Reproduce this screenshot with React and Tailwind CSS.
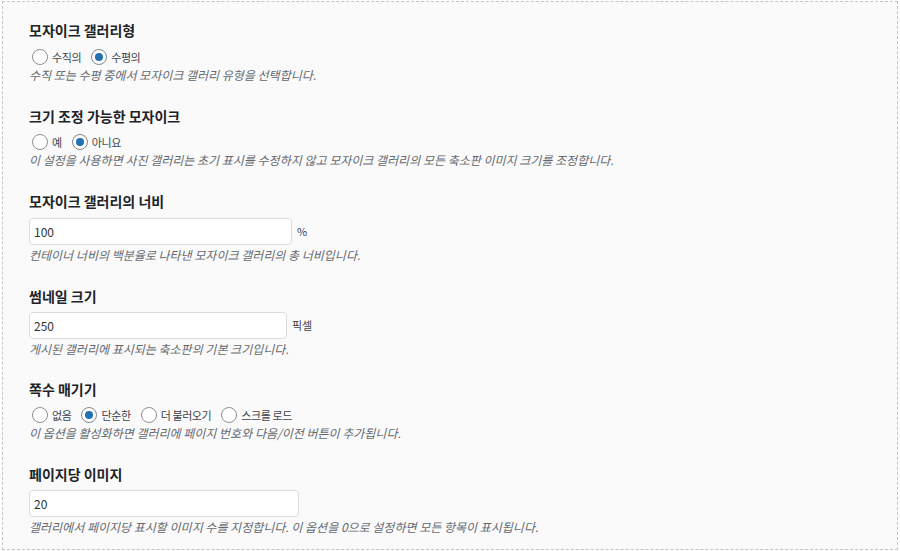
import React, { useState } from 'react';

const font = { fontFamily: '"Noto Sans CJK KR", "Noto Sans", sans-serif' };

function Radio({ label, checked, onChange }) {
  return (
    <label className="flex items-center gap-[4px] mr-[10px] cursor-pointer">
      <span
        onClick={onChange}
        className={`w-[16px] h-[16px] rounded-full border bg-white flex items-center justify-center ${
          checked ? 'border-[#7e8993]' : 'border-[#8c8f94]'
        }`}
      >
        {checked && <span className="w-[8px] h-[8px] rounded-full bg-[#2271b1]" />}
      </span>
      <span className="text-[11px] tracking-[-0.4px] text-[#3c434a] leading-[20px]">{label}</span>
    </label>
  );
}

function RadioSection({ title, options, initial, desc, gap }) {
  const [value, setValue] = useState(initial);
  return (
    <div className="ml-[26px]">
      <h3 className="text-[14px] font-semibold text-[#1d2327] leading-[20px] h-[20px]">{title}</h3>
      <div className={`flex items-center h-[20px] pl-[3px] ${gap}`}>
        {options.map((o, i) => (
          <Radio key={o} label={o} checked={value === i} onChange={() => setValue(i)} />
        ))}
      </div>
      <p className="text-[12px] italic text-[#646970] leading-[16px] h-[16px]">{desc}</p>
    </div>
  );
}

function InputSection({ title, value, unit, width, desc, gap }) {
  const [val, setVal] = useState(value);
  return (
    <div className="ml-[26px]">
      <h3 className="text-[14px] font-semibold text-[#1d2327] leading-[20px] h-[20px]">{title}</h3>
      <div className={`flex items-center gap-[5px] ${gap}`}>
        <input
          value={val}
          onChange={(e) => setVal(e.target.value)}
          className={`${width} h-[27px] bg-white border border-[#dcdcde] rounded-[4px] px-[4px] text-[12px] text-[#2c3338] outline-none`}
          style={font}
        />
        {unit && <span className="text-[11px] text-[#3c434a]">{unit}</span>}
      </div>
      <p className="text-[12px] italic text-[#646970] leading-[16px] h-[16px] mt-[2px]">{desc}</p>
    </div>
  );
}

export default function App() {
  return (
    <div className="w-[900px] h-[551px] bg-white p-[1px] pl-[2px]" style={font}>
      <div className="w-[896px] h-[549px] border border-dashed border-[#c3c4c7] bg-[#fafafa] pt-[18px]">
        <RadioSection
          gap="mt-[7px]"
          title="모자이크 갤러리형"
          options={['수직의', '수평의']}
          initial={1}
          desc="수직 또는 수평 중에서 모자이크 갤러리 유형을 선택합니다."
        />
        <div className="h-[23px]" />
        <RadioSection
          gap="mt-[6px]"
          title="크기 조정 가능한 모자이크"
          options={['예', '아니요']}
          initial={1}
          desc="이 설정을 사용하면 사진 갤러리는 초기 표시를 수정하지 않고 모자이크 갤러리의 모든 축소판 이미지 크기를 조정합니다."
        />
        <div className="h-[23px]" />
        <InputSection
          gap="mt-[7px]"
          title="모자이크 갤러리의 너비"
          value="100"
          unit="%"
          width="w-[263px]"
          desc="컨테이너 너비의 백분율로 나타낸 모자이크 갤러리의 총 너비입니다."
        />
        <div className="h-[23px]" />
        <InputSection
          gap="mt-[6px]"
          title="썸네일 크기"
          value="250"
          unit="픽셀"
          width="w-[258px]"
          desc="게시된 갤러리에 표시되는 축소판의 기본 크기입니다."
        />
        <div className="h-[22px]" />
        <RadioSection
          gap="mt-[6px]"
          title="쪽수 매기기"
          options={['없음', '단순한', '더 불러오기', '스크롤 로드']}
          initial={1}
          desc="이 옵션을 활성화하면 갤러리에 페이지 번호와 다음/이전 버튼이 추가됩니다."
        />
        <div className="h-[23px]" />
        <InputSection
          gap="mt-[6px]"
          title="페이지당 이미지"
          value="20"
          width="w-[270px]"
          desc="갤러리에서 페이지당 표시할 이미지 수를 지정합니다. 이 옵션을 0으로 설정하면 모든 항목이 표시됩니다."
        />
      </div>
    </div>
  );
}
